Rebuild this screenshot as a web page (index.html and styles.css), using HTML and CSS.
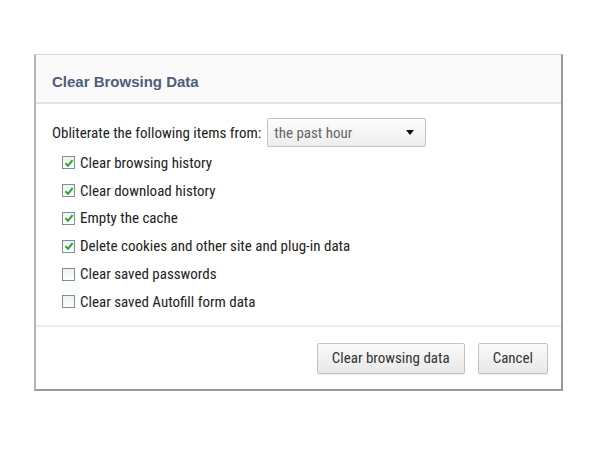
FILE: index.html
```html
<!DOCTYPE html>
<html>
<head>
<meta charset="utf-8">
<link rel="stylesheet" href="styles.css">
</head>
<body>
<div class="dialog">
  <div class="header">Clear Browsing Data</div>
  <div class="body">
    <div class="from-row">
      <span>Obliterate the following items from:</span>
      <div class="select"><span>the past hour</span><span class="arrow"></span></div>
    </div>
    <ul class="items">
      <li><span class="cb on"><svg viewBox="0 0 10 10" width="10" height="10"><path d="M1.5 5.2 L4 7.8 L8.6 2.2" fill="none" stroke="#2aa52a" stroke-width="2"/></svg></span>Clear browsing history</li>
      <li><span class="cb on"><svg viewBox="0 0 10 10" width="10" height="10"><path d="M1.5 5.2 L4 7.8 L8.6 2.2" fill="none" stroke="#2aa52a" stroke-width="2"/></svg></span>Clear download history</li>
      <li><span class="cb on"><svg viewBox="0 0 10 10" width="10" height="10"><path d="M1.5 5.2 L4 7.8 L8.6 2.2" fill="none" stroke="#2aa52a" stroke-width="2"/></svg></span>Empty the cache</li>
      <li><span class="cb on"><svg viewBox="0 0 10 10" width="10" height="10"><path d="M1.5 5.2 L4 7.8 L8.6 2.2" fill="none" stroke="#2aa52a" stroke-width="2"/></svg></span>Delete cookies and other site and plug-in data</li>
      <li><span class="cb"></span>Clear saved passwords</li>
      <li><span class="cb"></span>Clear saved Autofill form data</li>
    </ul>
  </div>
  <div class="footer">
    <button class="btn">Clear browsing data</button>
    <button class="btn">Cancel</button>
  </div>
</div>
</body>
</html>
```
FILE: styles.css
```css
html, body { margin: 0; padding: 0; background: #fff; }
body {
  padding: 54px 0 0 34px;
  font-family: "Liberation Sans Narrow", "Roboto Condensed", "Liberation Sans", sans-serif;
  font-size: 15px;
  color: #222;
}
.dialog {
  width: 529px;
  height: 337px;
  border: 1px solid #d4d4d4;
  border-right: 2px solid #9a9a9a;
  border-bottom: 2px solid #9a9a9a;
  border-left: 2px solid #b4b4b4;
  display: flex;
  flex-direction: column;
  box-sizing: border-box;
}
.header {
  height: 49px;
  box-sizing: border-box;
  background: #fafafa;
  border-bottom: 2px solid #e2e4e8;
  padding: 18px 0 0 16px;
  font-family: "Liberation Sans", sans-serif;
  font-weight: bold;
  font-size: 15px;
  color: #4e5e79;
}
.body {
  height: 223px;
  box-sizing: border-box;
  padding: 14px 0 0 16px;
  border-bottom: 2px solid #ececec;
}
.from-row {
  display: flex;
  align-items: center;
  gap: 6px;
}
.select {
  width: 159px;
  height: 29px;
  box-sizing: border-box;
  border: 1px solid #c4c4c4;
  border-radius: 2px;
  background: linear-gradient(#fdfdfd, #ededed);
  display: flex;
  align-items: center;
  justify-content: space-between;
  padding: 0 11px 0 6px;
  color: #666;
}
.arrow {
  width: 0; height: 0;
  border-left: 4px solid transparent;
  border-right: 4px solid transparent;
  border-top: 5px solid #111;
}
.items {
  list-style: none;
  margin: 2px 0 0 10px;
  padding: 0;
}
.items li {
  height: 27.8px;
  display: flex;
  align-items: center;
  gap: 5px;
}
.cb {
  width: 13px; height: 13px;
  box-sizing: border-box;
  border: 1px solid #7a8ea6;
  background: linear-gradient(#f0f0f0, #ffffff);
  display: flex; align-items: center; justify-content: center;
}
.footer {
  flex: 1;
  display: flex;
  justify-content: flex-end;
  align-items: center;
  gap: 13px;
  padding-right: 13px;
}
.btn {
  font-family: inherit;
  font-size: 15px;
  color: #333;
  height: 31px;
  padding: 0 14px;
  border: 1px solid #c3c3c3;
  border-radius: 2px;
  background: linear-gradient(#fafafa, #e8e8e8);
  box-shadow: 0 1px 1px rgba(0,0,0,0.08);
}
```
